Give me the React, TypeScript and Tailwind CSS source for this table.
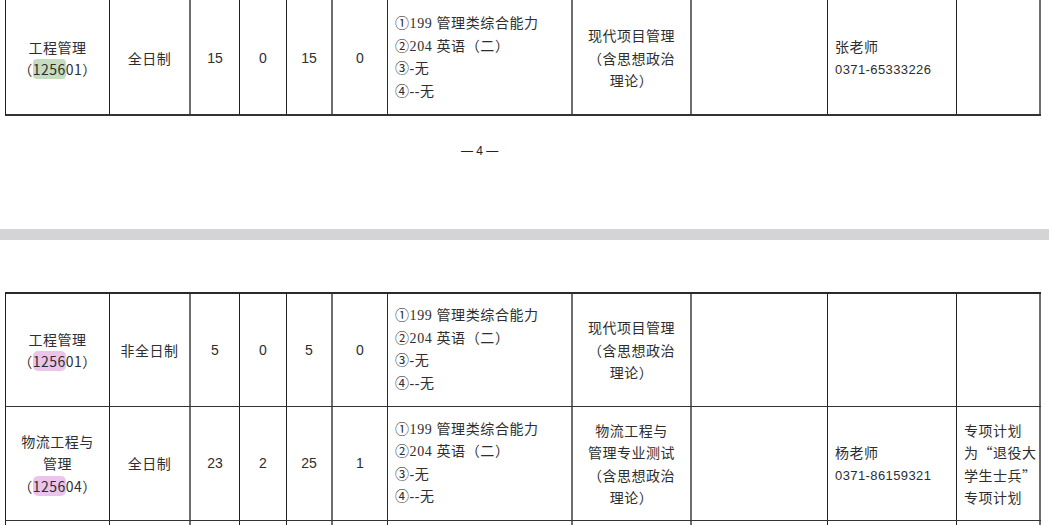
import type { ReactNode } from 'react'

// column right-edge lines: thin black vs the heavier grey ones the PDF renderer produced
const lines = [
  'border-r border-r-[#1f1f1f]',
  'border-r-2 border-r-[#6e6e6e]',
  'border-r border-r-[#1f1f1f]',
  'border-r border-r-[#1f1f1f]',
  'border-r-2 border-r-[#6e6e6e]',
  'border-r border-r-[#2a2a2a]',
  'border-r-2 border-r-[#6e6e6e]',
  'border-r-2 border-r-[#6e6e6e]',
  'border-r border-r-[#1f1f1f]',
  'border-r border-r-[#1f1f1f]',
  'border-r-2 border-r-[#6e6e6e]',
]

const cjk = "font-['Noto_Sans_CJK_SC',sans-serif] tracking-[0.5px]"
const serif = "font-['Liberation_Serif','Noto_Sans_CJK_SC',serif] tracking-[0.6px]"
const sans = "font-['Liberation_Sans',sans-serif]"

function Row({ cells, className, cellClass = '' }: { cells: ReactNode[]; className: string; cellClass?: string }) {
  return (
    <div
      className={`ml-[5px] grid w-[1036px] grid-cols-[104px_81px_49px_47px_46px_55px_185px_119px_136px_129px_84px] border-l border-l-[#1f1f1f] ${className}`}
    >
      {cells.map((c, i) => (
        <div key={i} className={`flex items-center ${lines[i]} ${cellClass}`}>
          {c}
        </div>
      ))}
    </div>
  )
}

function Center({ children, className = cjk }: { children: ReactNode; className?: string }) {
  return <div className={`w-full text-center text-[14px] leading-[22.5px] text-[#2e2e2e] ${className}`}>{children}</div>
}

function Left({ children, className = cjk }: { children: ReactNode; className?: string }) {
  return <div className={`w-full pl-[7px] text-left text-[14px] leading-[22.5px] text-[#2e2e2e] ${className}`}>{children}</div>
}

function Code({ code, tail, color }: { code: string; tail: string; color: 'green' | 'pink' }) {
  return (
    <div>
      （
      <span className={color === 'green' ? 'rounded-[4px] bg-[#c6dcc0]' : 'rounded-[5px] bg-[#eac4ea]'}>{code}</span>
      {tail}）
    </div>
  )
}

function Exams() {
  return (
    <Left className={serif}>
      <div>①199 管理类综合能力</div>
      <div>②204 英语（二）</div>
      <div>③-无</div>
      <div>④--无</div>
    </Left>
  )
}

function Contact({ name, phone }: { name: string; phone: string }) {
  return (
    <div className="w-full pl-[7px] leading-[23px] text-[#2e2e2e]">
      <div className={`${cjk} text-[14px]`}>{name}</div>
      <div className={`${sans} text-[13px] tracking-[0.4px]`}>{phone}</div>
    </div>
  )
}

const num = (n: string) => <Center className={sans}>{n}</Center>

export default function App() {
  return (
    <div className="h-[525px] w-[1049px] overflow-hidden bg-white">
      {/* page 4, tail of the table */}
      <Row
        className="h-[116px] border-b-2 border-b-[#333]"
        cellClass="pt-[2px]"
        cells={[
          <Center>
            <div>工程管理</div>
            <Code code="1256" tail="01" color="green" />
          </Center>,
          <Center>全日制</Center>,
          num('15'),
          num('0'),
          num('15'),
          num('0'),
          <Exams />,
          <Center>
            <div>现代项目管理</div>
            <div>（含思想政治</div>
            <div>理论）</div>
          </Center>,
          null,
          <Contact name="张老师" phone="0371-65333226" />,
          null,
        ]}
      />
      <div className="h-[113px] pt-[27px]">
        <div className={`ml-[461px] text-[12px] leading-[16px] text-[#222] ${sans}`}>— 4 —</div>
      </div>

      <div className="h-[11px] bg-[#d4d4d6]" />

      {/* page 5 */}
      <div className="h-[52px]" />
      <Row
        className="h-[115px] border-t-2 border-b border-t-[#2a2a2a] border-b-[#333]"
        cells={[
          <Center>
            <div>工程管理</div>
            <Code code="1256" tail="01" color="pink" />
          </Center>,
          <Center>非全日制</Center>,
          num('5'),
          num('0'),
          num('5'),
          num('0'),
          <Exams />,
          <Center>
            <div>现代项目管理</div>
            <div>（含思想政治</div>
            <div>理论）</div>
          </Center>,
          null,
          null,
          null,
        ]}
      />
      <Row
        className="h-[114px] border-b border-b-[#333]"
        cells={[
          <Center>
            <div>物流工程与</div>
            <div>管理</div>
            <Code code="1256" tail="04" color="pink" />
          </Center>,
          <Center>全日制</Center>,
          num('23'),
          num('2'),
          num('25'),
          num('1'),
          <Exams />,
          <Center>
            <div>物流工程与</div>
            <div>管理专业测试</div>
            <div>（含思想政治</div>
            <div>理论）</div>
          </Center>,
          null,
          <Contact name="杨老师" phone="0371-86159321" />,
          <Left>
            <div>专项计划</div>
            <div>为“退役大</div>
            <div>学生士兵”</div>
            <div>专项计划</div>
          </Left>,
        ]}
      />
      <Row className="h-[60px]" cells={[null, null, null, null, null, null, null, null, null, null, null]} />
    </div>
  )
}
